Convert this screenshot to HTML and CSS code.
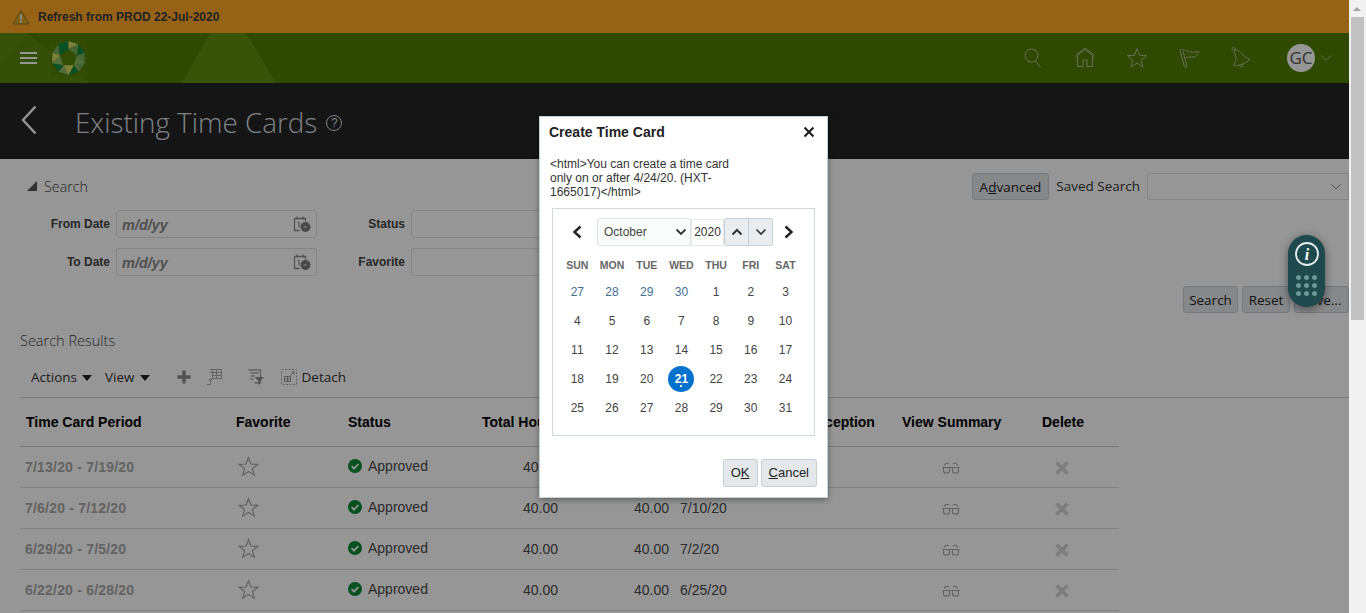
FILE: index.html
```html
<!DOCTYPE html>
<html lang="en">
<head>
    <meta charset="UTF-8">
    <meta name="viewport" content="width=device-width, initial-scale=1.0">
    <title>Existing Time Cards</title>
    <link rel="stylesheet" href="styles.css">
</head>
<body>
    <svg class="defs" width="0" height="0">
        <symbol id="i-cal" viewBox="0 0 18 18">
            <path d="M1.500 3.500h11v3M1.500 3.500v12h5M4 1.500v3M10 1.500v3" fill="none" stroke="#8c8c8c" stroke-width="1.300"/>
            <path d="M4.500 7.500h1.500v5" fill="none" stroke="#8c8c8c" stroke-width="1.200"/>
            <circle cx="12.500" cy="12" r="5" fill="#7c7c7c"/>
            <path d="M10.500 12h3" stroke="#ddd" stroke-width="1.200"/>
        </symbol>
        <symbol id="i-star" viewBox="0 0 22 22">
            <path d="M11 1.800l2.600 6.600 7 .4-5.500 4.400 1.900 6.900L11 16.200l-6 3.900 1.900-6.900L1.400 8.800l7-.4z" fill="none" stroke="#a8a8a8" stroke-width="1.300"/>
        </symbol>
        <symbol id="i-ok" viewBox="0 0 16 16">
            <circle cx="8" cy="8" r="7" fill="#0b8a36"/>
            <path d="M4.600 8.200l2.400 2.400 4.400-4.600" fill="none" stroke="#fff" stroke-width="1.800"/>
        </symbol>
        <symbol id="i-glasses" viewBox="0 0 18 14">
            <path d="M1.500 6.500h6v3.200a2.300 2.300 0 0 1-2.300 2.300H3.800a2.300 2.300 0 0 1-2.300-2.300zM10.500 6.500h6v3.200a2.300 2.300 0 0 1-2.300 2.300h-1.400a2.300 2.300 0 0 1-2.300-2.300zM.5 6.500h17M2 4.500C2.500 2.500 5 1.500 7 3M11 3c2-1.500 4.500-.5 5 1.500" fill="none" stroke="#a8a8a8" stroke-width="1.100"/>
        </symbol>
        <symbol id="i-x" viewBox="0 0 16 16">
            <path d="M2.500 2.500l11 11M13.500 2.500l-11 11" fill="none" stroke="#d4d4d4" stroke-width="3.600"/>
        </symbol>
    </svg>

    <div class="window">
        <main class="page">
            <div class="banner">
                <svg class="warn" width="18" height="16" viewBox="0 0 18 16">
                    <path d="M9 1.500L17 15H1z" fill="#d9a520" stroke="#8a7a30"/>
                    <path d="M9 5.500v5M9 11.500v2" stroke="#f4f4f4" stroke-width="2"/>
                </svg>
                <span>Refresh from PROD 22-Jul-2020</span>
            </div>

            <nav class="topnav">
                <svg class="nav-shapes" width="1349" height="50" viewBox="0 0 1349 50">
                    <path d="M0 0h28L0 36z" fill="#5f8a10"/>
                    <path d="M0 36L28 0l62 50H0z" fill="#5f8a10" opacity=".7"/>
                    <path d="M182 50L210 0h36l30 50z" fill="#62900f"/>
                </svg>
                <div class="nav-left">
                    <div class="burger"><i></i><i></i><i></i></div>
                    <svg class="logo" width="37" height="35" viewBox="0 0 37 35">
                        <rect width="37" height="35" fill="#55800a"/>
                        <path d="M8.500 3.200L18.500 0 18.500 8z" fill="#0f8a42"/>
                        <path d="M18.500 0L28.500 3.200 18.500 8z" fill="#d6dc62"/>
                        <path d="M18.500 8L27.100 14.200 28.500 3.200z" fill="#74b05a"/>
                        <path d="M28.500 3.200L34.700 11.700 27.100 14.200z" fill="#0f8a42"/>
                        <path d="M34.700 11.700L34.700 22.300 27.100 14.200z" fill="#74b05a"/>
                        <path d="M27.100 14.200L34.700 22.300 23.800 24.300z" fill="#8cbc60"/>
                        <path d="M34.700 22.300L28.500 30.800 23.800 24.300z" fill="#74b05a"/>
                        <path d="M28.500 30.800L18.500 34 23.800 24.300z" fill="#0f8a42"/>
                        <path d="M23.800 24.300L18.500 34 13.200 24.300z" fill="#d6dc62"/>
                        <path d="M18.500 34L8.500 30.800 13.200 24.300z" fill="#8cbc60"/>
                        <path d="M8.500 30.800L2.300 22.300 13.200 24.300z" fill="#0f8a42"/>
                        <path d="M13.200 24.300L2.300 22.300 9.900 14.200z" fill="#8cbc60"/>
                        <path d="M2.300 22.300V11.700L9.900 14.200z" fill="#d6dc62"/>
                        <path d="M2.300 11.700L8.500 3.200 9.900 14.200z" fill="#74b05a"/>
                        <path d="M8.500 3.200L18.500 8 9.900 14.200z" fill="#0f8a42"/>
                    </svg>
                </div>
                <div class="nav-right">
                    <svg class="nav-icon" width="22" height="22" viewBox="0 0 22 22"><circle cx="9.500" cy="8.500" r="6.500"/><path d="M13.500 14l5 6.500"/></svg>
                    <svg class="nav-icon" width="22" height="22" viewBox="0 0 22 22"><path d="M1.500 10L11 2.500l9.500 7.500M2 8L11 1l9 7M3.500 9.500v10h5.500V13h4v6.500h5.500v-10"/></svg>
                    <svg class="nav-icon" width="22" height="22" viewBox="0 0 22 22"><path d="M11 1.500l2.500 6.800 7.200.3-5.600 4.500 2 7-6.100-4-6.100 4 2-7-5.600-4.500 7.200-.3z"/></svg>
                    <svg class="nav-icon" width="22" height="22" viewBox="0 0 22 22"><path d="M2 3.500L6.500 20c1 1 2.500 .5 2.500-.5L5 4M2 3.500c4-2.500 7 1 10 1.500s7 0 9-1c-1 3-3 6-6 6s-5 0-8 1"/></svg>
                    <svg class="nav-icon" width="22" height="22" viewBox="0 0 22 22"><path d="M4 3C8 2 11 5 13 8c1 2 4 3 7 4.500-2 2-6 4-9 5-3 .5-5 2-7 1.500C3 17 7 14 6 10 5.500 8 4 6 4 3zM9 18a2 2 0 0 0 4-1M2.500 3a1.500 1.500 0 1 1 2 0"/></svg>
                    <div class="avatar">GC</div>
                    <svg class="nav-icon nav-caret" width="12" height="8" viewBox="0 0 12 8"><path d="M1 1.500l5 5 5-5"/></svg>
                </div>
            </nav>

            <header class="title-bar">
                <svg class="back" width="16" height="30" viewBox="0 0 16 30"><path d="M14.500 1.500L2 15l12.500 13.500"/></svg>
                <h1>Existing Time Cards</h1>
                <span class="help">?</span>
            </header>

            <section class="search">
                <div class="search-top">
                    <h2 class="search-title"><i class="tri"></i>Search</h2>
                    <div class="saved">
                        <button class="btn"><span>A<u>d</u>vanced</span></button>
                        <span class="saved-label">Saved Search</span>
                        <div class="fake-select"><svg width="12" height="8" viewBox="0 0 12 8"><path d="M1.500 1.500L6 6l4.500-4.500" fill="none" stroke="#999"/></svg></div>
                    </div>
                </div>
                <div class="search-form">
                    <label>From Date</label>
                    <div class="date-input"><em>m/d/yy</em><svg width="18" height="18"><use href="#i-cal"/></svg></div>
                    <label>Status</label>
                    <div class="text-input"></div>
                    <label>To Date</label>
                    <div class="date-input"><em>m/d/yy</em><svg width="18" height="18"><use href="#i-cal"/></svg></div>
                    <label>Favorite</label>
                    <div class="text-input"></div>
                </div>
                <div class="search-actions">
                    <button class="btn">Search</button>
                    <button class="btn btn-tight">Reset</button>
                    <button class="btn">Save...</button>
                </div>
            </section>

            <section class="results">
                <h2 class="results-title">Search Results</h2>
                <div class="toolbar">
                    <span class="menu">Actions<i class="caret"></i></span>
                    <span class="menu">View<i class="caret"></i></span>
                    <svg class="tool-plus" width="16" height="16" viewBox="0 0 16 16"><path d="M8 1.500v13M1.500 8h13" stroke="#8c8c8c" stroke-width="3.400"/></svg>
                    <svg class="tool-freeze" width="16" height="18" viewBox="0 0 16 18"><path d="M3.500 1.500h12v9h-9V1.500M3.500 4.500h12M6.500 7.500h9M10.500 1.500v9M1 16.500h3.500V11M2.500 12.500l2-2 2 2" fill="none" stroke="#a8a8a8"/></svg>
                    <svg class="tool-filter" width="17" height="16" viewBox="0 0 17 16"><path d="M1.500 1h12v13h-6M3.500 4h8M3.500 7h4M3.500 10h3" fill="none" stroke="#a8a8a8" stroke-width="1.300"/><path d="M7.500 8h9.500l-4 4v3.500h-1.500V12z" fill="#8c8c8c"/></svg>
                    <svg class="tool-detach" width="16" height="16" viewBox="0 0 16 16"><path d="M.5.500h15v15H.5z" fill="none" stroke="#a8a8a8" stroke-dasharray="2 1.500"/><path d="M3.500 7.500h6v5h-6zM3.500 10h6M6.500 7.500v5M9.500 6.500l3.500-3.500M10.500 3h2.500v2.500" fill="none" stroke="#999"/></svg>
                    <span class="detach">Detach</span>
                </div>
                <table class="cards">
                    <colgroup>
                        <col class="c-period"><col class="c-fav"><col class="c-status"><col class="c-total"><col class="c-abs">
                        <col class="c-date"><col class="c-exc"><col class="c-view"><col class="c-del">
                    </colgroup>
                    <thead>
                        <tr><th>Time Card Period</th><th>Favorite</th><th>Status</th><th>Total Hours</th><th></th><th></th><th class="th-exc">Exception</th><th>View Summary</th><th>Delete</th></tr>
                    </thead>
                    <tbody>
                        <tr>
                            <td class="period">7/13/20 - 7/19/20</td>
                            <td><svg class="star" width="21" height="21"><use href="#i-star"/></svg></td>
                            <td><svg class="ok" width="16" height="16"><use href="#i-ok"/></svg>Approved</td>
                            <td class="num">40.00</td><td class="num">40.00</td><td>7/17/20</td><td></td>
                            <td><svg class="glasses" width="18" height="14"><use href="#i-glasses"/></svg></td>
                            <td><svg class="del" width="16" height="16"><use href="#i-x"/></svg></td>
                        </tr>
                        <tr>
                            <td class="period">7/6/20 - 7/12/20</td>
                            <td><svg class="star" width="21" height="21"><use href="#i-star"/></svg></td>
                            <td><svg class="ok" width="16" height="16"><use href="#i-ok"/></svg>Approved</td>
                            <td class="num">40.00</td><td class="num">40.00</td><td>7/10/20</td><td></td>
                            <td><svg class="glasses" width="18" height="14"><use href="#i-glasses"/></svg></td>
                            <td><svg class="del" width="16" height="16"><use href="#i-x"/></svg></td>
                        </tr>
                        <tr>
                            <td class="period">6/29/20 - 7/5/20</td>
                            <td><svg class="star" width="21" height="21"><use href="#i-star"/></svg></td>
                            <td><svg class="ok" width="16" height="16"><use href="#i-ok"/></svg>Approved</td>
                            <td class="num">40.00</td><td class="num">40.00</td><td>7/2/20</td><td></td>
                            <td><svg class="glasses" width="18" height="14"><use href="#i-glasses"/></svg></td>
                            <td><svg class="del" width="16" height="16"><use href="#i-x"/></svg></td>
                        </tr>
                        <tr>
                            <td class="period">6/22/20 - 6/28/20</td>
                            <td><svg class="star" width="21" height="21"><use href="#i-star"/></svg></td>
                            <td><svg class="ok" width="16" height="16"><use href="#i-ok"/></svg>Approved</td>
                            <td class="num">40.00</td><td class="num">40.00</td><td>6/25/20</td><td></td>
                            <td><svg class="glasses" width="18" height="14"><use href="#i-glasses"/></svg></td>
                            <td><svg class="del" width="16" height="16"><use href="#i-x"/></svg></td>
                        </tr>
                    </tbody>
                </table>
            </section>

            <div class="overlay"></div>

            <div class="helper">
                <svg width="26" height="26" viewBox="0 0 26 26">
                    <circle cx="13" cy="13" r="11" fill="none" stroke="#e8eeee" stroke-width="1.800"/>
                    <text x="13" y="18.500" text-anchor="middle" class="helper-i">i</text>
                </svg>
                <div class="helper-dots"><i></i><i></i><i></i><i></i><i></i><i></i><i></i><i></i><i></i></div>
            </div>

            <div class="dialog">
                <div class="dialog-head">
                    <span>Create Time Card</span>
                    <svg width="12" height="12" viewBox="0 0 12 12"><path d="M1.500 1.500l9 9M10.500 1.500l-9 9" stroke="#222" stroke-width="2.200"/></svg>
                </div>
                <p class="dialog-msg">&lt;html&gt;You can create a time card only on or after 4/24/20. (HXT-1665017)&lt;/html&gt;</p>
                <div class="calendar">
                    <div class="cal-nav">
                        <svg class="cal-arrow" width="12" height="14" viewBox="0 0 12 14"><path d="M9.500 1.500L3.500 7l6 5.500"/></svg>
                        <div class="cal-month">October<svg width="12" height="8" viewBox="0 0 12 8"><path d="M1.500 1.500L6 6l4.500-4.500" fill="none" stroke="#333" stroke-width="1.800"/></svg></div>
                        <div class="cal-year">2020</div>
                        <div class="cal-spin">
                            <span><svg width="12" height="8" viewBox="0 0 12 8"><path d="M1.500 6.500L6 2l4.500 4.500" fill="none" stroke="#333" stroke-width="2"/></svg></span>
                            <span><svg width="12" height="8" viewBox="0 0 12 8"><path d="M1.500 1.500L6 6l4.500-4.500" fill="none" stroke="#333" stroke-width="1.600"/></svg></span>
                        </div>
                        <svg class="cal-arrow cal-next" width="12" height="14" viewBox="0 0 12 14"><path d="M2.500 1.500L8.500 7l-6 5.500"/></svg>
                    </div>
                    <div class="cal-grid">
                        <b>SUN</b><b>MON</b><b>TUE</b><b>WED</b><b>THU</b><b>FRI</b><b>SAT</b>
                        <span class="prev">27</span><span class="prev">28</span><span class="prev">29</span><span class="prev">30</span><span>1</span><span>2</span><span>3</span>
                        <span>4</span><span>5</span><span>6</span><span>7</span><span>8</span><span>9</span><span>10</span>
                        <span>11</span><span>12</span><span>13</span><span>14</span><span>15</span><span>16</span><span>17</span>
                        <span>18</span><span>19</span><span>20</span><span class="today">21</span><span>22</span><span>23</span><span>24</span>
                        <span>25</span><span>26</span><span>27</span><span>28</span><span>29</span><span>30</span><span>31</span>
                    </div>
                </div>
                <div class="dialog-foot">
                    <button class="dlg-btn">O<u>K</u></button>
                    <button class="dlg-btn"><u>C</u>ancel</button>
                </div>
            </div>
        </main>

        <div class="scrollbar">
            <i class="scroll-up"></i>
            <div class="scroll-thumb"></div>
        </div>
    </div>
</body>
</html>
```

FILE: styles.css
```css
html, body {
    margin: 0;
    height: 100%;
    overflow: hidden;
}
body {
    font-family: "Liberation Sans", Arial, sans-serif;
    font-size: 14px;
    color: #333;
    background: #fff;
}
.defs {
    position: absolute;
}
.window {
    display: flex;
    height: 613px;
}
.page {
    position: relative;
    width: 1349px;
    height: 613px;
    overflow: hidden;
    flex: none;
}
.overlay {
    position: absolute;
    inset: 0;
    background: rgba(0,0,0,0.41);
}

/* top bars */
.banner {
    height: 33px;
    background: #ffa826;
    display: flex;
    align-items: center;
    padding-left: 12px;
    gap: 8px;
    font-size: 12px;
    font-weight: bold;
    color: #3a3a3a;
}
.topnav {
    position: relative;
    height: 50px;
    background: #517d00;
    display: flex;
    justify-content: space-between;
    align-items: center;
}
.nav-shapes {
    position: absolute;
    left: 0;
    top: 0;
}
.nav-left {
    position: relative;
    display: flex;
    align-items: center;
    padding-left: 20px;
    gap: 13px;
}
.burger i {
    display: block;
    width: 17px;
    height: 2px;
    background: #fff;
    margin: 3px 0;
}
.nav-right {
    position: relative;
    display: flex;
    align-items: center;
    gap: 30px;
    padding-right: 17px;
}
.nav-icon {
    fill: none;
    stroke: #aebb98;
    stroke-width: 1;
}
.avatar {
    width: 28px;
    height: 28px;
    margin-left: 5px;
    border-radius: 50%;
    background: #fff;
    color: #555;
    font-family: "Open Sans", sans-serif;
    font-size: 17px;
    line-height: 28px;
    text-align: center;
}
.nav-caret {
    margin-left: -25px;
}
.title-bar {
    height: 76px;
    background: #252525;
    display: flex;
    align-items: center;
    padding-left: 21px;
    color: #d8dde0;
}
.back {
    fill: none;
    stroke: #fff;
    stroke-width: 2.400;
    margin-top: -2px;
}
.title-bar h1 {
    margin: 1px 0 0 38px;
    font-family: "Open Sans", sans-serif;
    font-size: 27.800px;
    font-weight: 300;
}
.help {
    width: 14px;
    height: 14px;
    margin: 3px 0 0 9px;
    border: 1.500px solid #d8dde0;
    border-radius: 50%;
    font-size: 12px;
    line-height: 14px;
    text-align: center;
}

/* search */
.search {
    padding-top: 14px;
    font-family: "Open Sans", sans-serif;
}
.search-top {
    display: flex;
    justify-content: space-between;
    align-items: center;
    height: 27px;
}
.search-title {
    margin: -1px 0 0 27px;
    display: flex;
    align-items: center;
    gap: 7px;
    font-size: 14.300px;
    font-weight: 300;
    color: #444;
}
.tri {
    width: 0;
    height: 0;
    border-left: 10px solid transparent;
    border-bottom: 10px solid #555;
}
.saved {
    display: flex;
    align-items: center;
}
.btn {
    height: 27px;
    padding: 0;
    border: 1px solid #c4ced7;
    border-radius: 3px;
    background: #e4e8ea;
    color: #222;
    font-family: "Open Sans", sans-serif;
    font-size: 13.500px;
    cursor: pointer;
}
.saved .btn {
    padding: 0 7px;
}
.saved-label {
    margin: -2px 7px 0;
    font-size: 13.500px;
    color: #333;
}
.fake-select {
    width: 202px;
    height: 27px;
    box-sizing: border-box;
    border: 1px solid #dfe4e7;
    border-radius: 3px 0 0 3px;
    display: flex;
    align-items: center;
    justify-content: flex-end;
    padding-right: 6px;
}
.search-form {
    display: grid;
    grid-template-columns: 90px 201px 82px 200px;
    grid-auto-rows: 28px;
    column-gap: 6px;
    row-gap: 10px;
    margin: 10px 0 0 20px;
    font-family: "Liberation Sans", Arial, sans-serif;
}
.search-form label {
    align-self: center;
    text-align: right;
    font-size: 12px;
    font-weight: bold;
    color: #444;
}
.date-input, .text-input {
    box-sizing: border-box;
    border: 1px solid #dfe4e7;
    border-radius: 3px;
}
.date-input {
    display: flex;
    align-items: center;
    justify-content: space-between;
    padding: 0 5px 0 5px;
}
.date-input em {
    padding-top: 2px;
    font-size: 14.500px;
    font-weight: bold;
    color: #888;
}
.search-actions {
    display: flex;
    justify-content: flex-end;
    gap: 4px;
    margin-top: 10px;
}
.search-actions .btn {
    width: 55px;
}
.search-actions .btn-tight {
    width: 48px;
}

/* results */
.results {
    margin-top: 18px;
    font-family: "Open Sans", sans-serif;
}
.results-title {
    margin: 0 0 0 20px;
    font-size: 14.500px;
    font-weight: 300;
    line-height: 20px;
    color: #444;
}
.toolbar {
    height: 37px;
    margin: 7px 0 0 20px;
    padding: 0 0 2px 11px;
    border-bottom: 1px solid #c9cfd4;
    display: flex;
    align-items: center;
}
.menu {
    font-size: 13.500px;
    color: #333;
    margin-right: 13px;
}
.caret {
    display: inline-block;
    margin-left: 5px;
    vertical-align: 1px;
    border: 5px solid transparent;
    border-top: 6px solid #222;
    border-bottom: 0;
}
.tool-plus {
    margin-left: 13px;
}
.tool-freeze {
    margin-left: 14px;
}
.tool-filter {
    margin-left: 25px;
}
.tool-detach {
    margin-left: 17px;
}
.detach {
    margin-left: 5px;
    font-size: 13.500px;
    color: #333;
}
.cards {
    margin-left: 20px;
    width: 1099px;
    table-layout: fixed;
    border-collapse: collapse;
    font-family: "Liberation Sans", Arial, sans-serif;
}
.c-period { width: 210px; }
.c-fav { width: 112px; }
.c-status { width: 134px; }
.c-total { width: 88px; }
.c-abs { width: 110px; }
.c-date { width: 106px; }
.c-exc { width: 116px; }
.c-view { width: 140px; }
.c-del { width: 83px; }
.cards th {
    height: 48px;
    padding: 0 6px;
    text-align: left;
    font-size: 14px;
    color: #000;
    white-space: nowrap;
    border-bottom: 1px solid #c9cfd4;
}
.cards .th-exc {
    padding-left: 28px;
}
.cards td {
    height: 40px;
    padding: 0 6px;
    border-bottom: 1px solid #d9dde0;
    color: #4a4a4a;
    white-space: nowrap;
}
.cards td:nth-child(2), .cards td:nth-child(3) {
    padding-bottom: 2px;
    height: 38px;
}
.cards .period {
    padding-left: 5px;
    font-weight: bold;
    letter-spacing: .2px;
    color: #a8a8a8;
}
.cards .num {
    text-align: right;
}
.cards .num + .num {
    padding-right: 5px;
}
.star {
    margin-left: 2px;
    vertical-align: middle;
}
.ok {
    margin: 0 5px 0 -1px;
    vertical-align: -3px;
}
.glasses {
    margin-left: 40px;
    vertical-align: middle;
}
.del {
    margin-left: 12px;
    vertical-align: middle;
}

/* floating helper */
.helper {
    position: absolute;
    left: 1288px;
    top: 235px;
    width: 37px;
    height: 72px;
    border-radius: 19px;
    background: #1e4a4d;
    box-shadow: 0 2px 8px rgba(0,0,0,0.45);
    display: flex;
    flex-direction: column;
    align-items: center;
    padding-top: 6px;
    box-sizing: border-box;
}
.helper-i {
    font-family: "Liberation Serif", serif;
    font-style: italic;
    font-weight: bold;
    font-size: 16px;
    fill: #fff;
}
.helper-dots {
    display: grid;
    grid-template-columns: repeat(3, 5px);
    gap: 3px;
    margin-top: 8px;
}
.helper-dots i {
    width: 5px;
    height: 5px;
    border-radius: 50%;
    background: #6f9496;
}

/* dialog */
.dialog {
    position: absolute;
    left: 539px;
    top: 116px;
    width: 289px;
    height: 382px;
    box-sizing: border-box;
    background: #fff;
    border: 1px solid #c4ced7;
    box-shadow: 0 2px 6px rgba(0,0,0,0.35);
}
.dialog-head {
    display: flex;
    justify-content: space-between;
    align-items: center;
    padding: 4px 12px 0 9px;
    height: 22px;
    font-size: 14px;
    font-weight: bold;
    color: #222;
}
.dialog-msg {
    margin: 14px 0 0 10px;
    width: 195px;
    font-size: 12px;
    line-height: 14px;
    color: #333;
}
.calendar {
    margin: 9px 0 0 12px;
    width: 263px;
    height: 228px;
    box-sizing: border-box;
    border: 1px solid #cfdbe3;
    padding: 9px 0 0 7px;
}
.cal-nav {
    display: flex;
    align-items: center;
    height: 28px;
}
.cal-arrow {
    fill: none;
    stroke: #222;
    stroke-width: 2.400;
    margin-left: 11px;
}
.cal-next {
    margin-left: 10px;
}
.cal-month {
    width: 94px;
    height: 28px;
    margin-left: 14px;
    padding: 0 3px 0 6px;
    box-sizing: border-box;
    display: flex;
    align-items: center;
    justify-content: space-between;
    border: 1px solid #dde3e8;
    border-radius: 3px;
    background: #fbfcfc;
    font-size: 12px;
    color: #444;
}
.cal-year {
    width: 33px;
    height: 27px;
    box-sizing: border-box;
    border: 1px solid #e4e8ea;
    font-size: 12px;
    line-height: 24px;
    text-align: center;
    color: #333;
}
.cal-spin {
    display: flex;
    height: 28px;
    border: 1px solid #c4ced7;
    border-radius: 3px;
    box-sizing: border-box;
    background: #e9edef;
}
.cal-spin span {
    width: 23px;
    display: flex;
    align-items: center;
    justify-content: center;
}
.cal-spin span + span {
    border-left: 1px solid #c4ced7;
}
.cal-grid {
    display: grid;
    grid-template-columns: repeat(7, 34.700px);
    grid-template-rows: 26px repeat(5, 29px);
    margin-top: 6px;
    text-align: center;
    font-size: 12px;
    color: #444;
}
.cal-grid b {
    font-size: 10.500px;
    line-height: 26px;
    color: #666;
}
.cal-grid span {
    line-height: 29px;
}
.cal-grid .prev {
    color: #3f6f94;
}
.cal-grid .today {
    position: relative;
    justify-self: center;
    width: 26px;
    height: 26px;
    margin-top: 1px;
    line-height: 26px;
    border-radius: 50%;
    background: #0572ce;
    color: #fff;
    font-weight: bold;
}
.today::after {
    content: "";
    position: absolute;
    left: 12px;
    top: 19px;
    width: 2px;
    height: 2px;
    background: #fff;
}
.dialog-foot {
    display: flex;
    justify-content: flex-end;
    gap: 3px;
    margin: 23px 10px 0 0;
}
.dlg-btn {
    height: 28px;
    padding: 0 7px 2px;
    border: 1px solid #c4ced7;
    border-radius: 3px;
    background: #e4e8ea;
    color: #222;
    font-family: "Liberation Sans", Arial, sans-serif;
    font-size: 13px;
    cursor: pointer;
}
.dlg-btn:first-child {
    width: 35px;
}

/* browser scrollbar */
.scrollbar {
    width: 17px;
    background: #f1f1f1;
    position: relative;
    flex: none;
}
.scroll-up {
    position: absolute;
    left: 4px;
    top: 7px;
    border: 4px solid transparent;
    border-top: 0;
    border-bottom: 4px solid #a3a3a3;
}
.scroll-thumb {
    position: absolute;
    left: 2px;
    right: 2px;
    top: 17px;
    height: 303px;
    background: #c1c1c1;
}
```
